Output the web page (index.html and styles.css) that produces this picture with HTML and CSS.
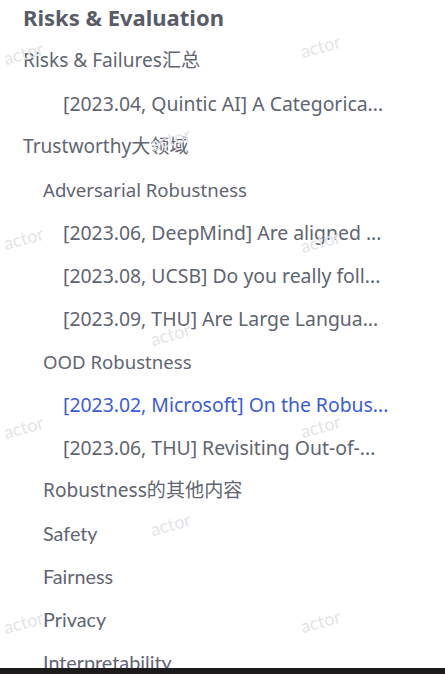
FILE: index.html
```html
<!DOCTYPE html>
<html lang="zh">
<head>
<meta charset="utf-8">
<title>Risks &amp; Evaluation</title>
<link rel="stylesheet" href="styles.css">
</head>
<body>
<nav class="toc">
  <h2 class="toc-title">Risks &amp; Evaluation</h2>
  <ul class="toc-list">
    <li class="item l0">Risks &amp; Failures汇总</li>
    <li class="item l2 paper">[2023.04, Quintic AI] A Categorica...</li>
    <li class="item l0">Trustworthy大领域</li>
    <li class="item l1">Adversarial Robustness</li>
    <li class="item l2 paper">[2023.06, DeepMind] Are aligned ...</li>
    <li class="item l2 paper">[2023.08, UCSB] Do you really foll...</li>
    <li class="item l2 paper">[2023.09, THU] Are Large Langua...</li>
    <li class="item l1">OOD Robustness</li>
    <li class="item l2 paper active">[2023.02, Microsoft] On the Robus...</li>
    <li class="item l2 paper">[2023.06, THU] Revisiting Out-of-...</li>
    <li class="item l1 cjk">Robustness的其他内容</li>
    <li class="item l1 lato">Safety</li>
    <li class="item l1 lato">Fairness</li>
    <li class="item l1 lato">Privacy</li>
    <li class="item l1 lato">Interpretability</li>
  </ul>
</nav>
<div class="watermarks" aria-hidden="true">
  <span class="wm wm-a">actor</span>
  <span class="wm wm-b">actor</span>
  <span class="wm wm-c">actor</span>
  <span class="wm wm-d">actor</span>
  <span class="wm wm-e">actor</span>
  <span class="wm wm-f">actor</span>
  <span class="wm wm-g">actor</span>
  <span class="wm wm-h">actor</span>
  <span class="wm wm-i">actor</span>
  <span class="wm wm-j">actor</span>
  <span class="wm wm-k">actor</span>
</div>
<div class="taskbar"></div>
</body>
</html>
```
FILE: styles.css
```css
html, body {
  margin: 0;
  padding: 0;
  background: #ffffff;
  height: 674px;
  overflow: hidden;
}
body {
  font-family: "Noto Sans", "Noto Sans CJK SC", sans-serif;
  color: #5f6571;
  position: relative;
}
.toc {
  width: 420px;
  padding-left: 23px;
  box-sizing: border-box;
}
.toc-title {
  margin: 0 0 5px 0;
  font-size: 22px;
  font-weight: 700;
  line-height: 34px;
  color: #575c67;
}
.toc-list {
  list-style: none;
  margin: 0;
  padding: 0;
}
.item {
  height: 43px;
  line-height: 43px;
  font-size: 18.6px;
  white-space: nowrap;
}
.l0, .cjk { font-size: 19.1px; }
.l1 { padding-left: 20px; }
.l2 { padding-left: 40px; }
.paper { font-size: 19.4px; }
.lato {
  font-family: "Lato", sans-serif;
  font-size: 19.8px;
}
.active { color: #3b5bdb; }

.watermarks {
  position: absolute;
  inset: 0;
  pointer-events: none;
}
.wm {
  position: absolute;
  font-family: "Lato", sans-serif;
  font-size: 18px;
  color: #e4e5e8;
  transform: rotate(-16deg);
  line-height: 1;
}
.wm-a { left: 3px; top: 44px; }
.wm-b { left: 300px; top: 37px; }
.wm-c { left: 150px; top: 130px; }
.wm-d { left: 3px; top: 229px; }
.wm-e { left: 300px; top: 232px; }
.wm-f { left: 150px; top: 325px; }
.wm-g { left: 3px; top: 418px; }
.wm-h { left: 300px; top: 417px; }
.wm-i { left: 150px; top: 515px; }
.wm-j { left: 3px; top: 613px; }
.wm-k { left: 300px; top: 612px; }

.taskbar {
  position: fixed;
  left: 0;
  right: 0;
  bottom: 0;
  height: 6px;
  background: #1c1a1a;
}
```
